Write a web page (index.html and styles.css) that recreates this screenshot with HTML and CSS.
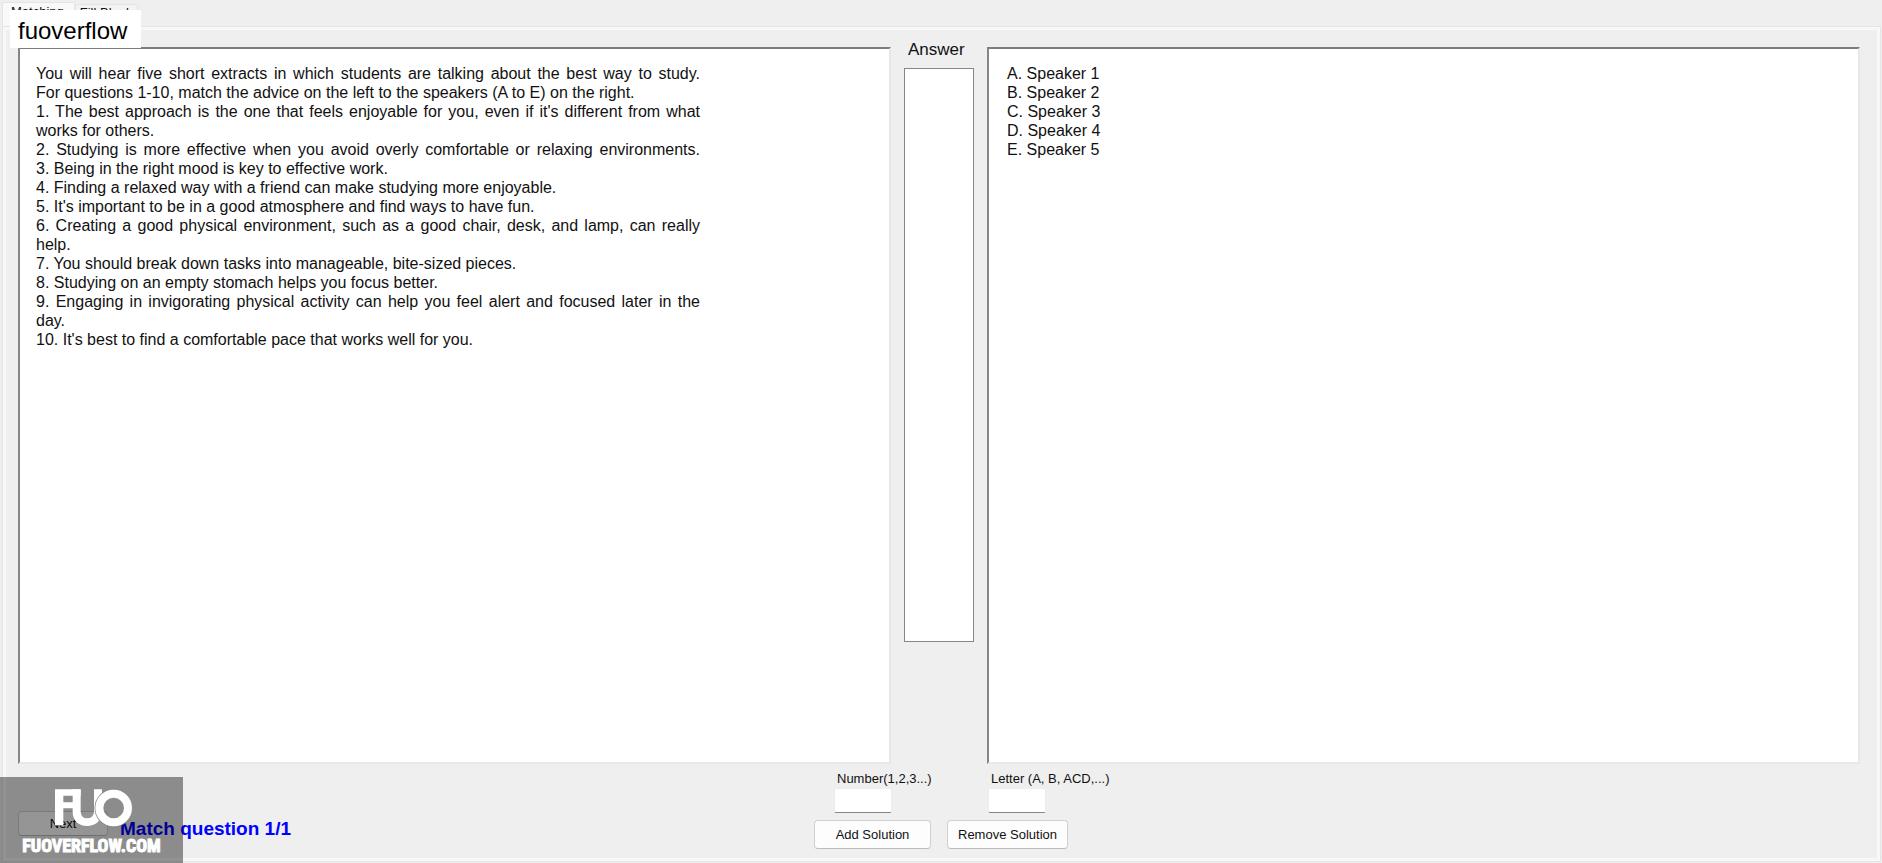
FILE: index.html
```html
<!DOCTYPE html>
<html lang="en">
<head>
  <meta charset="UTF-8" />
  <meta name="viewport" content="width=device-width, initial-scale=1.0"/>
  <title>Match question</title>
  <link rel="stylesheet" href="styles.css">
</head>
<body>
  <nav class="tabs">
    <button type="button" class="tab active">Matching</button>
    <button type="button" class="tab">Fill Blank</button>
  </nav>
  <div class="tag">fuoverflow</div>

  <main class="tab-page">
    <div class="columns">
      <section class="panel questions">
        <div class="question-text">
          <p class="wide">You will hear five short extracts in which students are talking about the best way to study.</p>
          <p>For questions 1-10, match the advice on the left to the speakers (A to E) on the right.</p>
          <p class="wide">1. The best approach is the one that feels enjoyable for you, even if it's different from what</p>
          <p>works for others.</p>
          <p class="wide">2. Studying is more effective when you avoid overly comfortable or relaxing environments.</p>
          <p>3. Being in the right mood is key to effective work.</p>
          <p>4. Finding a relaxed way with a friend can make studying more enjoyable.</p>
          <p>5. It's important to be in a good atmosphere and find ways to have fun.</p>
          <p>6. Creating a good physical environment, such as a good chair, desk, and lamp, can really help.</p>
          <p>7. You should break down tasks into manageable, bite-sized pieces.</p>
          <p>8. Studying on an empty stomach helps you focus better.</p>
          <p>9. Engaging in invigorating physical activity can help you feel alert and focused later in the day.</p>
          <p>10. It's best to find a comfortable pace that works well for you.</p>
        </div>
      </section>

      <div class="answer">
        <label for="answer-list">Answer</label>
        <select id="answer-list" size="10" multiple></select>
      </div>

      <section class="panel speakers">
        <p>A. Speaker 1</p>
        <p>B. Speaker 2</p>
        <p>C. Speaker 3</p>
        <p>D. Speaker 4</p>
        <p>E. Speaker 5</p>
      </section>
    </div>

    <div class="controls">
      <div class="progress">
        <button type="button" class="btn next">Next</button>
        <h1>Match question 1/1</h1>
      </div>
      <form class="solution">
        <div class="fields">
          <div class="field">
            <label for="number">Number(1,2,3...)</label>
            <input type="text" id="number">
          </div>
          <div class="field">
            <label for="letter">Letter (A, B, ACD,...)</label>
            <input type="text" id="letter">
          </div>
        </div>
        <div class="actions">
          <button type="button" class="btn add">Add Solution</button>
          <button type="button" class="btn remove">Remove Solution</button>
        </div>
      </form>
    </div>
  </main>

  <div class="watermark">
    <svg class="logo" width="80" height="40" viewBox="0 0 240 120" aria-hidden="true">
      <g fill="#fff">
        <path d="M3 4H80V23H28V43H60V61H28V112H3Z"/>
        <path d="M56 4H80V72Q82 91 99 91Q118 91 120 72V4H144V72C142 100 124 114 99 114C74 114 56 98 56 72Z"/>
      </g>
      <circle cx="179" cy="60" r="43" fill="none" stroke="#8d8d8d" stroke-width="29"/>
      <circle cx="179" cy="60" r="43" fill="none" stroke="#fff" stroke-width="24"/>
    </svg>
    <span>FUOVERFLOW.COM</span>
  </div>
</body>
</html>
```
FILE: styles.css
```css
* {
  box-sizing: border-box;
}
body {
  margin: 0;
  min-height: 100vh;
  display: flex;
  flex-direction: column;
  position: relative;
  background: #efefef;
  color: #111;
  font-family: "Liberation Sans", Arial, sans-serif;
  font-size: 13px;
}
p, h1 {
  margin: 0;
}
button, input, select {
  font: inherit;
  color: inherit;
}
.tabs {
  display: flex;
  align-items: flex-end;
  height: 26px;
  padding: 2px 2px 0;
}
.tab {
  height: 22px;
  padding: 0 4px 6px;
  background: #f3f3f3;
  border: 1px solid #e5e5e5;
  border-bottom: 0;
}
.tab.active {
  height: 24px;
  padding: 0 10px 7px 8px;
  background: #f9f9f9;
}
.tag {
  position: absolute;
  top: 10px;
  left: 10px;
  padding: 4px 14px 0 8px;
  background: #fff;
  color: #000;
  font-size: 24px;
  line-height: 34px;
}
.tab-page {
  flex: 1;
  display: flex;
  flex-direction: column;
  margin: 0 1px 1px 2px;
  padding: 13px 20px 12px 15px;
  border: 1px solid #e5e5e5;
  box-shadow: inset 0 0 0 3px #f8f8f8;
}
.columns {
  flex: 1;
  display: grid;
  grid-template-columns: 1fr 70px 1fr;
  gap: 13px;
}
.panel {
  margin-top: 7px;
  padding: 15px 16px;
  background: #fff;
  border: 2px solid;
  border-color: #7c7c7c #e8e8e8 #e8e8e8 #868686;
  font-size: 16px;
  line-height: 19px;
}
.speakers {
  padding-left: 18px;
}
.question-text {
  max-width: 664px;
  text-align: justify;
}
.wide {
  text-align-last: justify;
}
.answer {
  display: flex;
  flex-direction: column;
  gap: 8px;
  padding-bottom: 122px;
}
.answer label {
  padding-left: 4px;
  font-size: 17px;
  line-height: 20px;
}
.answer select {
  flex: 1;
  width: 100%;
  background: #fff;
  border: 1px solid #828790;
  border-radius: 0;
}
.controls {
  display: grid;
  grid-template-columns: 1fr 250px 1fr;
  padding-top: 6px;
}
.progress {
  display: flex;
  align-items: flex-start;
  gap: 12px;
  padding-top: 41px;
}
.progress h1 {
  padding-top: 7px;
  color: #00f;
  font-size: 19px;
  line-height: 22px;
}
.btn {
  height: 29px;
  padding: 0;
  background: #fdfdfd;
  border: 1px solid #d0d0d0;
  border-bottom-color: #bcbcbc;
  border-radius: 4px;
}
.next {
  width: 90px;
  height: 25px;
}
.add {
  width: 117px;
}
.remove {
  width: 121px;
}
.fields {
  display: grid;
  grid-template-columns: 154px auto;
  padding-left: 20px;
}
.field {
  display: flex;
  flex-direction: column;
  align-items: flex-start;
}
.field label {
  padding-left: 3px;
  line-height: 18px;
  white-space: nowrap;
}
.field input {
  width: 58px;
  height: 25px;
  background: #fff;
  border: 1px solid #ececec;
  border-bottom-color: #868686;
  border-radius: 2px;
}
.actions {
  display: flex;
  gap: 16px;
  width: max-content;
  padding-top: 7px;
}
.watermark {
  position: absolute;
  left: 0;
  bottom: 0;
  width: 183px;
  height: 86px;
  display: flex;
  flex-direction: column;
  align-items: center;
  padding-top: 11px;
  background: rgba(0, 0, 0, 0.41);
  color: #fff;
}
.watermark .logo {
  flex-shrink: 0;
  margin-left: 4px;
}
.watermark span {
  font-family: "Roboto Condensed", "Open Sans Condensed", "Liberation Sans", Arial, sans-serif;
  font-size: 18px;
  font-weight: bold;
  line-height: 35px;
  -webkit-text-stroke: 1px #fff;
}
```
